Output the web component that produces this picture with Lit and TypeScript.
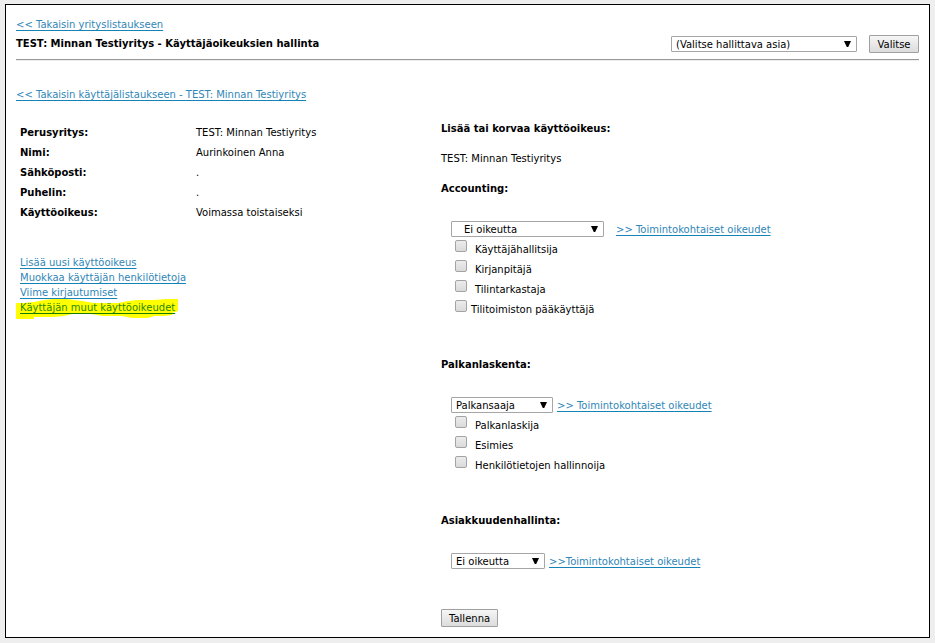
import { LitElement, html, css, svg } from "lit";
import { customElement, property } from "lit/decorators.js";

interface Right {
  label: string;
  tight?: boolean;
}

interface Section {
  title: string;
  key: string;
  value: string;
  link: string;
  size: "wide" | "medium" | "small";
  rights: Right[];
}

const details: [string, string][] = [
  ["Perusyritys:", "TEST: Minnan Testiyritys"],
  ["Nimi:", "Aurinkoinen Anna"],
  ["Sähköposti:", "."],
  ["Puhelin:", "."],
  ["Käyttöoikeus:", "Voimassa toistaiseksi"],
];

const sections: Section[] = [
  {
    title: "Accounting:",
    key: "accounting",
    value: "Ei oikeutta",
    link: ">> Toimintokohtaiset oikeudet",
    size: "wide",
    rights: [
      { label: "Käyttäjähallitsija" },
      { label: "Kirjanpitäjä" },
      { label: "Tilintarkastaja" },
      { label: "Tilitoimiston pääkäyttäjä", tight: true },
    ],
  },
  {
    title: "Palkanlaskenta:",
    key: "payroll",
    value: "Palkansaaja",
    link: ">> Toimintokohtaiset oikeudet",
    size: "medium",
    rights: [
      { label: "Palkanlaskija" },
      { label: "Esimies" },
      { label: "Henkilötietojen hallinnoija" },
    ],
  },
  {
    title: "Asiakkuudenhallinta:",
    key: "crm",
    value: "Ei oikeutta",
    link: ">>Toimintokohtaiset oikeudet",
    size: "small",
    rights: [],
  },
];

const shared = css`
  * {
    box-sizing: border-box;
  }
  a {
    color: #2f86b7;
    text-decoration: underline;
    text-underline-offset: 2px;
    text-decoration-thickness: 1px;
    text-decoration-color: #1583b5;
    text-decoration-skip-ink: none;
  }
`;

@customElement("select-box")
class SelectBox extends LitElement {
  @property() value = "";
  @property() name = "";
  @property() size = "medium";

  static styles = [
    shared,
    css`
      :host {
        display: inline-flex;
      }
      .box {
        position: relative;
        display: flex;
        height: 16px;
      }
      .top {
        width: 186px;
      }
      .wide {
        width: 153px;
      }
      .medium {
        width: 102px;
      }
      .small {
        width: 94px;
      }
      select {
        appearance: none;
        width: 100%;
        margin: 0;
        padding: 2px 16px 0 4px;
        border: 1px solid #a6a6a6;
        border-radius: 1px;
        background: #fff;
        color: #000;
        font: inherit;
        line-height: 12px;
      }
      .wide select {
        padding-left: 12px;
      }
      .arrow {
        position: absolute;
        top: 5px;
        right: 6px;
        width: 7px;
        height: 6px;
        pointer-events: none;
      }
    `,
  ];

  render() {
    return html`<div class="box ${this.size}">
      <select aria-label=${this.name}>
        <option>${this.value}</option>
      </select>
      <svg class="arrow" viewBox="0 0 7 6" aria-hidden="true">
        <path d="M0 0H7L4.2 6H2.8Z" fill="#000" />
      </svg>
    </div>`;
  }
}

@customElement("right-section")
class RightSection extends LitElement {
  @property({ attribute: false }) section!: Section;

  static styles = [
    shared,
    css`
      :host {
        display: block;
      }
      h2 {
        margin: 0 0 20px;
        font-size: 10px;
        line-height: 20px;
      }
      .body {
        padding-left: 10px;
      }
      .choice {
        display: flex;
        align-items: flex-start;
        gap: 4px;
        height: 20px;
        padding-top: 2px;
        line-height: 18px;
      }
      .choice.wide {
        gap: 12px;
      }
      .right {
        display: flex;
        gap: 8px;
        height: 20px;
        padding-left: 4px;
        line-height: 22px;
      }
      .right.tight {
        gap: 4px;
      }
      input {
        appearance: none;
        width: 12px;
        height: 12px;
        margin: 1px 0 0;
        border: 1px solid #a3a3a3;
        border-radius: 2px;
        background: linear-gradient(#ececec, #dadada);
      }
      input:checked {
        background: #555;
      }
    `,
  ];

  render() {
    const s = this.section;
    return html`
      <h2>${s.title}</h2>
      <div class="body">
        <div class="choice ${s.size}">
          <select-box .size=${s.size} .value=${s.value} .name=${s.title}></select-box>
          <a href="#${s.key}">${s.link}</a>
        </div>
        ${s.rights.map(
          (r, i) => html`<div class=${r.tight ? "right tight" : "right"}>
            <input type="checkbox" id="r${i}" /><label for="r${i}">${r.label}</label>
          </div>`
        )}
      </div>
    `;
  }
}

@customElement("app-root")
class AppRoot extends LitElement {
  static styles = [
    shared,
    css`
      :host {
        display: block;
        min-height: 100vh;
        box-sizing: border-box;
        padding: 4px 5px 5px;
        background: #eee;
        color: #000;
        font: 10px/20px "DejaVu Sans", Verdana, sans-serif;
      }
      .frame {
        padding: 10px;
        border: 1px solid #000;
        background: #fff;
      }
      header {
        display: flex;
        align-items: flex-end;
        justify-content: space-between;
        padding-bottom: 6px;
        border-bottom: 1px solid #999;
        box-shadow: 0 1px #eee;
        line-height: 19px;
      }
      h1 {
        margin: 0;
        font-size: 10px;
        line-height: 19px;
      }
      .pick {
        display: flex;
        align-items: center;
        gap: 12px;
      }
      button {
        height: 18px;
        min-width: 50px;
        padding: 2px 7px 0;
        border: 1px solid #a0a0a0;
        border-radius: 1px;
        background: linear-gradient(#f6f6f6, #dcdcdc);
        color: #000;
        font: inherit;
        line-height: 14px;
      }
      .back {
        margin-top: 25px;
      }
      .columns {
        display: grid;
        grid-template-columns: 425px 1fr;
      }
      .person {
        padding: 18px 4px 0;
      }
      table {
        border-collapse: collapse;
      }
      th {
        width: 176px;
        padding: 0;
        text-align: left;
      }
      td {
        padding: 0;
      }
      .links {
        display: flex;
        flex-direction: column;
        align-items: flex-start;
        margin-top: 32px;
        line-height: 15px;
      }
      .marked {
        position: relative;
        z-index: 0;
      }
      .marked a {
        color: #2c8800;
        text-decoration-color: #157c00;
      }
      .marker {
        position: absolute;
        z-index: -1;
        top: -1px;
        left: -4px;
        width: 162px;
        height: 20px;
      }
      .rights {
        display: flex;
        flex-direction: column;
        gap: 36px;
        padding-top: 14px;
      }
      .intro {
        display: flex;
        flex-direction: column;
        gap: 10px;
        margin-bottom: -26px;
      }
      .intro h2 {
        margin: 0;
        font-size: 10px;
        line-height: 20px;
      }
      .save {
        margin-top: 2px;
      }
      .save button {
        display: block;
      }
    `,
  ];

  render() {
    return html`
      <main class="frame">
        <header>
          <div>
            <a href="#companies">&lt;&lt; Takaisin yrityslistaukseen</a>
            <h1>TEST: Minnan Testiyritys - Käyttäjäoikeuksien hallinta</h1>
          </div>
          <div class="pick">
            <select-box
              size="top"
              value="(Valitse hallittava asia)"
              name="Hallittava asia"
            ></select-box>
            <button type="button">Valitse</button>
          </div>
        </header>
        <div class="back">
          <a href="#users">&lt;&lt; Takaisin käyttäjälistaukseen - TEST: Minnan Testiyritys</a>
        </div>
        <div class="columns">
          <section class="person">
            <table>
              ${details.map(
                ([k, v]) => html`<tr>
                  <th scope="row">${k}</th>
                  <td>${v}</td>
                </tr>`
              )}
            </table>
            <nav class="links">
              <a href="#add">Lisää uusi käyttöoikeus</a>
              <a href="#edit">Muokkaa käyttäjän henkilötietoja</a>
              <a href="#logins">Viime kirjautumiset</a>
              <span class="marked">
                <svg class="marker" viewBox="0 0 162 20" aria-hidden="true">
                  ${svg`<path fill="#ff0" d="M0 4H8L18 3L28 1L38 0H50L66 2L78 4H102L112 2L122 1H138L150 0H162V12L156 14V16L148 17H138L132 19H116L106 17H86L76 15H56L48 17L38 18H18V20H0Z"/>`}
                </svg>
                <a href="#other">Käyttäjän muut käyttöoikeudet</a>
              </span>
            </nav>
          </section>
          <section class="rights">
            <div class="intro">
              <h2>Lisää tai korvaa käyttöoikeus:</h2>
              <div>TEST: Minnan Testiyritys</div>
            </div>
            ${sections.map((s) => html`<right-section .section=${s}></right-section>`)}
            <div class="save"><button type="button">Tallenna</button></div>
          </section>
        </div>
      </main>
    `;
  }
}
